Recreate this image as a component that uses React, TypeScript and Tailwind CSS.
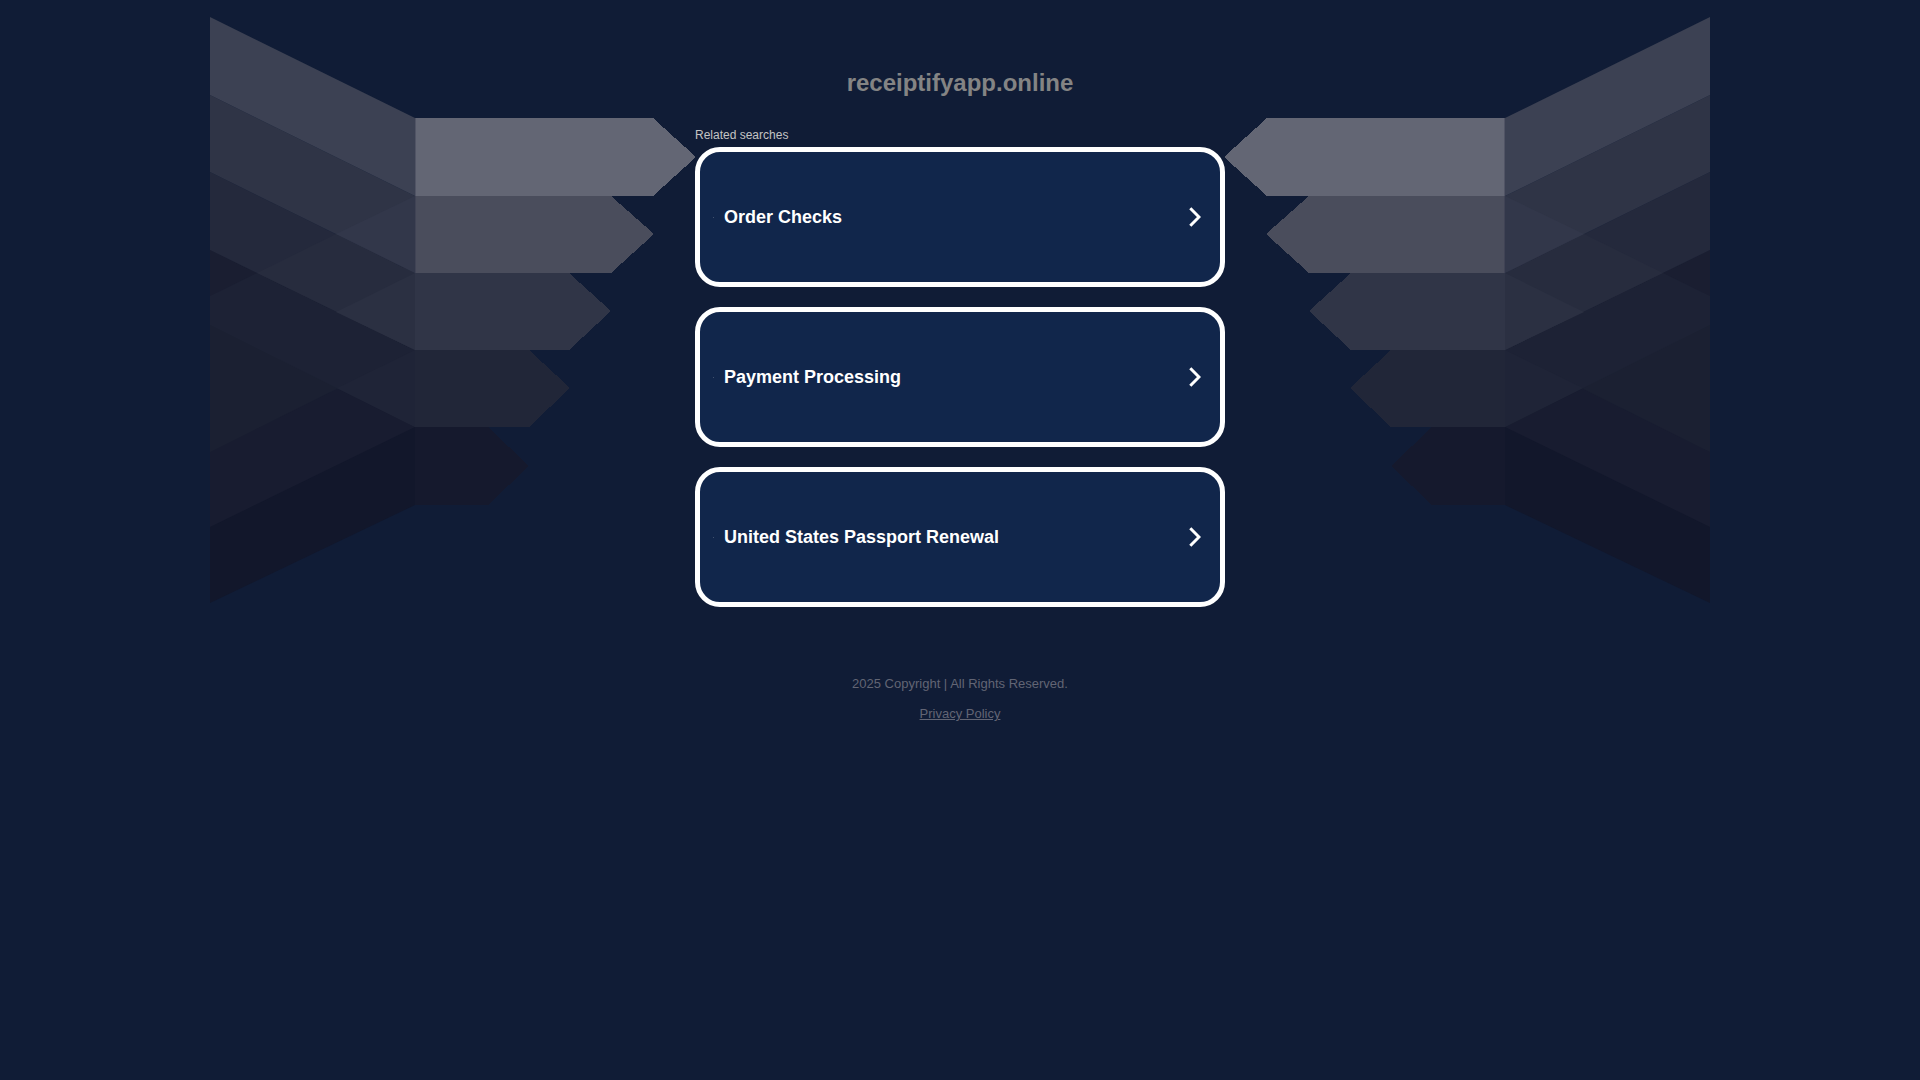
const searches = [
  { title: "Order Checks", href: "#order-checks" },
  { title: "Payment Processing", href: "#payment-processing" },
  { title: "United States Passport Renewal", href: "#passport-renewal" },
]

// Painted back to front, the right half is the same group mirrored
const facets = [
  { points: "0,250 205,350 205,505 0,603", fill: "#12172b" },
  { points: "0,250 205,350 205,427 0,527", fill: "#181c30" },
  { points: "0,250 205,350 0,452", fill: "#1b2032" },
  { points: "0,250 205,350 205,427 0,325", fill: "#1d2235" },
  { points: "205,350 205,427 127,388", fill: "#1f2437" },
  { points: "0,250 47,273 0,296", fill: "#1a1e31" },
  { points: "0,172 205,273 205,350 0,250", fill: "#24293c" },
  { points: "126,234 205,273 205,350 47,273", fill: "#272c3e" },
  { points: "205,273 205,350 126,312", fill: "#2b3042" },
  { points: "0,95 205,196 205,273 0,172", fill: "#2f3446" },
  { points: "205,196 205,273 126,234", fill: "#32374a" },
  { points: "0,17 205,118 205,196 0,95", fill: "#3c4153" },
]

const arrows = [
  { points: "205,118 443,118 486,157 443,196 205,196", fill: "#636674" },
  { points: "205,196 401,196 444,234 401,273 205,273", fill: "#4a4d5c" },
  { points: "205,273 359,273 401,311 359,350 205,350", fill: "#303547" },
  { points: "205,350 319,350 360,388 319,427 205,427", fill: "#212638" },
  { points: "205,427 278,427 319,466 278,505 205,505", fill: "#15192d" },
]

function Wing() {
  return (
    <>
      {facets.map((facet) => (
        <polygon key={facet.points} points={facet.points} fill={facet.fill} />
      ))}
      {arrows.map((arrow) => (
        <polygon key={arrow.points} points={arrow.points} fill={arrow.fill} shapeRendering="crispEdges" />
      ))}
      <rect x="205" y="118" width="1" height="78" fill="#515465" />
      <rect x="205" y="196" width="1" height="77" fill="#404355" />
    </>
  )
}

function Background() {
  return (
    <svg
      viewBox="0 0 1500 620"
      className="absolute top-0 left-1/2 w-[1500px] max-w-none -translate-x-1/2"
      aria-hidden="true"
    >
      <Wing />
      <g transform="translate(1500 0) scale(-1 1)">
        <Wing />
      </g>
    </svg>
  )
}

function Chevron() {
  return (
    <svg viewBox="0 0 12 20" className="h-5 w-3" fill="none" stroke="currentColor" strokeWidth="3" aria-hidden="true">
      <path d="M1.3 1.2L10 10L1.3 18.8" />
    </svg>
  )
}

export default function App() {
  return (
    <div className="relative min-h-screen overflow-hidden bg-[#101c36] font-['Liberation_Sans',Arial,sans-serif]">
      <Background />
      <div className="relative mx-auto w-full max-w-[530px] pt-[65px] pb-10">
        <h1 className="text-center text-2xl leading-9 font-bold text-[#848484]">receiptifyapp.online</h1>
        <main className="mt-[26px]">
          <h2 className="text-xs leading-4 text-[#c4c4c4]">Related searches</h2>
          <ul className="mt-1 flex flex-col gap-5">
            {searches.map((search) => (
              <li key={search.title}>
                <a
                  href={search.href}
                  className="flex h-[140px] items-center rounded-[25px] border-[5px] border-white bg-[#11264b] pr-[19px] pl-[13px] text-white"
                >
                  <span className="size-px bg-white/20" />
                  <span className="ml-2.5 flex-1 text-lg font-bold">{search.title}</span>
                  <Chevron />
                </a>
              </li>
            ))}
          </ul>
        </main>
        <footer className="mt-[67px] text-center text-[13px] leading-5 text-[#626574]">
          <p>2025 Copyright | All Rights Reserved.</p>
          <p className="mt-2.5">
            <a href="#privacy" className="underline">
              Privacy Policy
            </a>
          </p>
        </footer>
      </div>
    </div>
  )
}
